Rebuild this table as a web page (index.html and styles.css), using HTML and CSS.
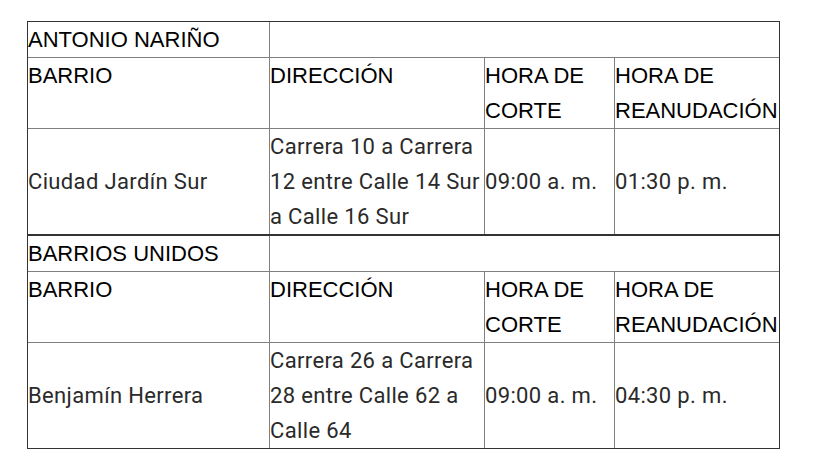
FILE: index.html
```html
<!DOCTYPE html>
<html lang="es">
<head>
<meta charset="utf-8">
<title>Cortes de agua</title>
<link rel="stylesheet" href="styles.css">
</head>
<body>
<div class="page">
  <table class="cortes">
    <colgroup><col class="c1"><col class="c2"><col class="c3"><col class="c4"></colgroup>
    <tr class="loc"><td>ANTONIO NARIÑO</td><td colspan="3" class="last"></td></tr>
    <tr class="head"><td>BARRIO</td><td>DIRECCIÓN</td><td>HORA DE CORTE</td><td class="last">HORA DE REANUDACIÓN</td></tr>
    <tr class="data end"><td>Ciudad Jardín Sur</td><td>Carrera 10 a Carrera 12 entre Calle 14 Sur a Calle 16 Sur</td><td>09:00 a. m.</td><td class="last">01:30 p. m.</td></tr>
  </table>
  <table class="cortes">
    <colgroup><col class="c1"><col class="c2"><col class="c3"><col class="c4"></colgroup>
    <tr class="loc"><td>BARRIOS UNIDOS</td><td colspan="3" class="last"></td></tr>
    <tr class="head"><td>BARRIO</td><td>DIRECCIÓN</td><td>HORA DE CORTE</td><td class="last">HORA DE REANUDACIÓN</td></tr>
    <tr class="data end"><td>Benjamín Herrera</td><td>Carrera 26 a Carrera 28 entre Calle 62 a Calle 64</td><td>09:00 a. m.</td><td class="last">04:30 p. m.</td></tr>
  </table>
</div>
</body>
</html>
```
FILE: styles.css
```css
html, body {
  margin: 0;
  padding: 0;
  background: #ffffff;
}
.page {
  padding: 21px 0 0 27px;
}
.cortes {
  border-collapse: separate;
  border-spacing: 0;
  border: 1px solid #333333;
  table-layout: fixed;
  width: 753px;
}
.c1 { width: 242px; }
.c2 { width: 215px; }
.c3 { width: 130px; }
.c4 { width: 164px; }
.cortes td {
  padding: 0;
  border-right: 1px solid #808080;
  border-bottom: 1px solid #808080;
  font-family: "Liberation Sans", Arial, sans-serif;
  font-size: 22px;
  line-height: 35px;
  color: #000000;
  vertical-align: top;
  height: 35px;
}
.cortes td.last {
  border-right: 0;
}
.cortes tr.end td {
  border-bottom: 0;
}
.cortes tr.data td {
  font-family: Roboto, "Liberation Sans", sans-serif;
  font-weight: 400;
  letter-spacing: 0.35px;
  color: #2a2a2a;
  vertical-align: middle;
}
```
